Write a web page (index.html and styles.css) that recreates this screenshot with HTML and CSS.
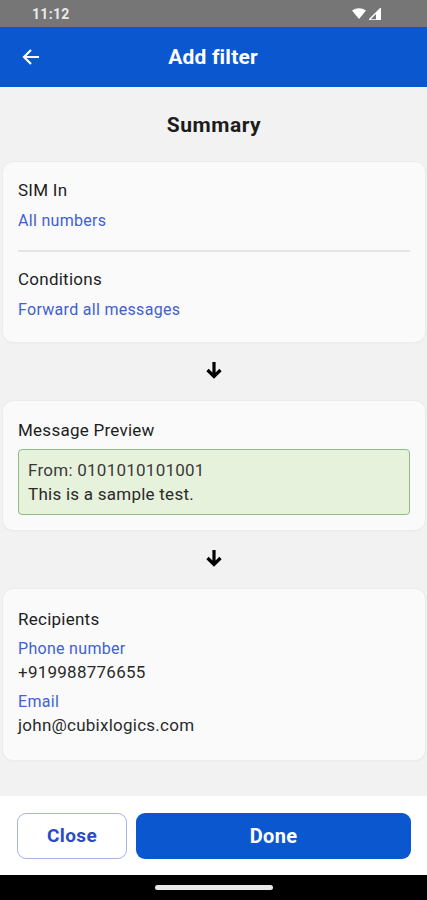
FILE: index.html
```html
<!DOCTYPE html>
<html>
<head>
<meta charset="utf-8">
<link rel="stylesheet" href="styles.css">
</head>
<body>
<div class="screen">
  <div class="statusbar">
    <span class="time">11:12</span>
    <span class="status-icons">
      <svg width="14" height="12" viewBox="0 0 14 12"><path d="M0 2.5 Q7 -2 14 2.5 L7 11 Z" fill="#fff"/></svg>
      <svg width="12" height="12" viewBox="0 0 12 12"><path d="M12 0 L12 12 L0 12 Z" fill="none" stroke="#fff" stroke-width="1.4"/><path d="M7 5 L7 12 L12 12 L12 0 Z" fill="#fff"/></svg>
    </span>
  </div>
  <header class="appbar">
    <svg class="back" width="20" height="20" viewBox="0 0 20 20"><path d="M18 10 H3 M10 3 L3 10 L10 17" fill="none" stroke="#fff" stroke-width="2.2"/></svg>
    <h1 class="title">Add filter</h1>
  </header>
  <main class="content">
    <h2 class="summary">Summary</h2>
    <section class="card">
      <div class="label">SIM In</div>
      <div class="link">All numbers</div>
      <div class="divider"></div>
      <div class="label">Conditions</div>
      <div class="link">Forward all messages</div>
    </section>
    <div class="arrow"><svg width="20" height="20" viewBox="0 0 20 20"><path d="M10 2 V16.5 M3.5 10 L10 16.5 L16.5 10" fill="none" stroke="#000" stroke-width="3.2"/></svg></div>
    <section class="card card-preview">
      <div class="label">Message Preview</div>
      <div class="preview">
        <div class="from">From: 0101010101001</div>
        <div class="body">This is a sample test.</div>
      </div>
    </section>
    <div class="arrow"><svg width="20" height="20" viewBox="0 0 20 20"><path d="M10 2 V16.5 M3.5 10 L10 16.5 L16.5 10" fill="none" stroke="#000" stroke-width="3.2"/></svg></div>
    <section class="card card-recipients">
      <div class="label">Recipients</div>
      <div class="sublink">Phone number</div>
      <div class="value">+919988776655</div>
      <div class="sublink">Email</div>
      <div class="value">john@cubixlogics.com</div>
    </section>
  </main>
  <footer class="actions">
    <button class="btn btn-close">Close</button>
    <button class="btn btn-done">Done</button>
  </footer>
  <div class="navbar"><span class="pill"></span></div>
</div>
</body>
</html>
```
FILE: styles.css
```css
* { box-sizing: border-box; }
html, body { margin: 0; padding: 0; }
body { font-family: Roboto, "Noto Sans", sans-serif; background: #f2f2f2; }
.screen { width: 427px; height: 900px; display: flex; flex-direction: column; overflow: hidden; }
.statusbar { height: 27px; background: #767676; display: flex; align-items: center; justify-content: space-between; padding: 0 46px 0 32px; }
.time { color: #e9e9e9; font-size: 14px; font-weight: 700; letter-spacing: 0.3px; }
.status-icons { display: flex; align-items: center; gap: 3px; }
.appbar { height: 60px; background: #0b57d0; display: flex; align-items: center; justify-content: center; position: relative; }
.back { position: absolute; left: 21px; top: 20px; }
.title { margin: 0; color: #fff; font-size: 21px; font-weight: 700; letter-spacing: 0.2px; padding-right: 1px; }
.content { flex: 1; padding: 0 2px 0 3px; display: flex; flex-direction: column; }
.summary { margin: 0; height: 75px; display: flex; align-items: center; justify-content: center; font-size: 21px; font-weight: 700; color: #1c1c1c; letter-spacing: 0.5px; }
.card { background: #fafafa; border-radius: 10px; box-shadow: 0 0 0 1px #ececec, 0 1px 2px rgba(0,0,0,0.06); padding: 16px 15px 20px 15px; }
.label { font-size: 17px; line-height: 24px; color: #1d1d1d; letter-spacing: 0.25px; }
.link { font-size: 16px; line-height: 24px; color: #3f60d2; margin-top: 7px; letter-spacing: 0.3px; }
.divider { height: 2px; background: #e4e4e4; margin: 17px 0 15px 0; }
.arrow { height: 59px; display: flex; align-items: center; justify-content: center; padding-right: 1px; padding-bottom: 3px; }
.card-preview { padding: 17px 15px 15px 15px; }
.preview { margin-top: 7px; background: #e7f2dc; border: 1px solid #8fbb84; border-radius: 4px; padding: 8px 9px 8px 9px; }
.from, .body { font-size: 17px; line-height: 24px; color: #2a2a2a; letter-spacing: 0.25px; }
.from { color: #3a3a3a; }
.card-recipients { padding: 18px 15px 23px 15px; }
.sublink { font-size: 16px; line-height: 22px; color: #4062d2; margin-top: 7px; letter-spacing: 0.3px; }
.value { font-size: 17px; line-height: 24px; color: #2a2a2a; letter-spacing: 0.25px; }
.actions { height: 79px; background: #fff; display: flex; align-items: center; gap: 9px; padding: 0 16px 0 17px; margin-top: auto; }
.btn { height: 46px; border-radius: 9px; font-family: Roboto, sans-serif; font-weight: 700; }
.btn-close { width: 110px; background: #fff; border: 1.5px solid #a9b5e6; color: #2a4cc4; font-size: 19px; letter-spacing: 0.4px; }
.btn-done { flex: 1; background: #0b57d0; border: none; color: #fff; font-size: 20px; letter-spacing: 0.3px; }
.navbar { height: 25px; background: #000; display: flex; justify-content: center; align-items: center; }
.pill { width: 118px; height: 5px; background: #e8e8e8; border-radius: 3px; margin-left: 1px; }
```
